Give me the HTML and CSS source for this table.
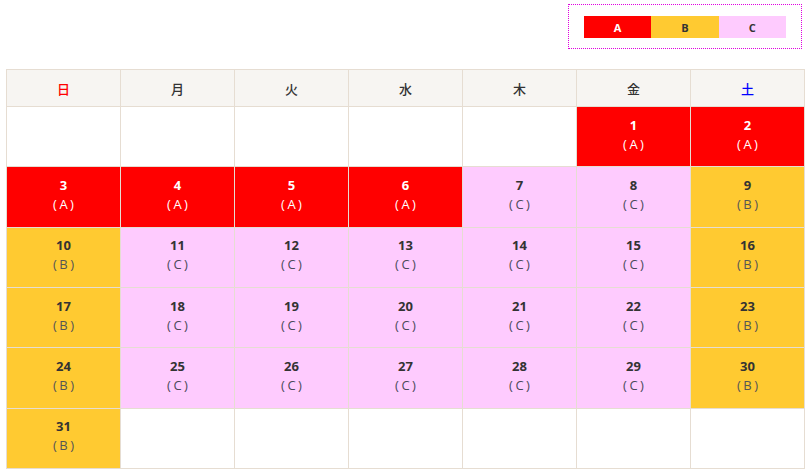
FILE: index.html
```html
<!DOCTYPE html>
<html lang="ja">
<head>
<meta charset="utf-8">
<title>カレンダー</title>
<link rel="stylesheet" href="styles.css">
</head>
<body>
<div class="page">
  <div class="legend">
    <span class="key key-a">A</span><span class="key key-b">B</span><span class="key key-c">C</span>
  </div>
  <table class="cal">
    <thead>
      <tr>
        <th class="sun">日</th><th>月</th><th>火</th><th>水</th><th>木</th><th>金</th><th class="sat">土</th>
      </tr>
    </thead>
    <tbody>
      <tr>
        <td></td><td></td><td></td><td></td><td></td>
        <td class="a"><b>1</b><span>(A)</span></td>
        <td class="a"><b>2</b><span>(A)</span></td>
      </tr>
      <tr>
        <td class="a"><b>3</b><span>(A)</span></td>
        <td class="a"><b>4</b><span>(A)</span></td>
        <td class="a"><b>5</b><span>(A)</span></td>
        <td class="a"><b>6</b><span>(A)</span></td>
        <td class="c"><b>7</b><span>(C)</span></td>
        <td class="c"><b>8</b><span>(C)</span></td>
        <td class="b"><b>9</b><span>(B)</span></td>
      </tr>
      <tr>
        <td class="b"><b>10</b><span>(B)</span></td>
        <td class="c"><b>11</b><span>(C)</span></td>
        <td class="c"><b>12</b><span>(C)</span></td>
        <td class="c"><b>13</b><span>(C)</span></td>
        <td class="c"><b>14</b><span>(C)</span></td>
        <td class="c"><b>15</b><span>(C)</span></td>
        <td class="b"><b>16</b><span>(B)</span></td>
      </tr>
      <tr>
        <td class="b"><b>17</b><span>(B)</span></td>
        <td class="c"><b>18</b><span>(C)</span></td>
        <td class="c"><b>19</b><span>(C)</span></td>
        <td class="c"><b>20</b><span>(C)</span></td>
        <td class="c"><b>21</b><span>(C)</span></td>
        <td class="c"><b>22</b><span>(C)</span></td>
        <td class="b"><b>23</b><span>(B)</span></td>
      </tr>
      <tr>
        <td class="b"><b>24</b><span>(B)</span></td>
        <td class="c"><b>25</b><span>(C)</span></td>
        <td class="c"><b>26</b><span>(C)</span></td>
        <td class="c"><b>27</b><span>(C)</span></td>
        <td class="c"><b>28</b><span>(C)</span></td>
        <td class="c"><b>29</b><span>(C)</span></td>
        <td class="b"><b>30</b><span>(B)</span></td>
      </tr>
      <tr>
        <td class="b"><b>31</b><span>(B)</span></td>
        <td></td><td></td><td></td><td></td><td></td><td></td>
      </tr>
    </tbody>
  </table>
</div>
</body>
</html>
```

FILE: styles.css
```css
html, body {
  margin: 0;
  padding: 0;
  background: #fff;
}
body {
  font-family: "Open Sans", "Noto Sans CJK JP", sans-serif;
  color: #333;
}
.page {
  display: flex;
  flex-direction: column;
  padding: 4px 6px 0 6px;
}
.legend {
  align-self: flex-end;
  margin-right: 3px;
  width: 234px;
  height: 45px;
  box-sizing: border-box;
  border: 1px dotted #e000e0;
  padding: 11px 15px 0 15px;
  display: flex;
}
.key {
  width: 68px;
  height: 22px;
  display: flex;
  align-items: center;
  justify-content: center;
  font-size: 11px;
  font-weight: 700;
}
.key-a { background: #ff0000; color: #fff; }
.key-b { background: #ffca31; color: #333; }
.key-c { background: #fecbfe; color: #333; }

.cal {
  margin-top: 20px;
  width: 799px;
  border-collapse: collapse;
  table-layout: fixed;
}
.cal th, .cal td {
  border: 1px solid #e6ddd2;
  text-align: center;
  padding: 0;
}
.cal th {
  height: 36px;
  background: #f7f5f2;
  font-family: "Noto Sans CJK JP", sans-serif;
  font-size: 13px;
  font-weight: 500;
  color: #333;
}
.cal th.sun { color: #ff0000; }
.cal th.sat { color: #0000ff; }
.cal td {
  height: 55.33px;
  padding-bottom: 4px;
  vertical-align: middle;
}
.cal td b {
  display: block;
  font-size: 13px;
  font-weight: 700;
  line-height: 18px;
  color: #333;
}
.cal td span {
  display: block;
  font-size: 13px;
  line-height: 20px;
  letter-spacing: 2.5px;
  padding-left: 2.5px;
  color: #555;
}
.cal td.a { background: #ff0000; }
.cal td.a b, .cal td.a span { color: #fff; }
.cal td.b { background: #ffca31; }
.cal td.c { background: #fecbfe; }
.cal td.c span { color: #4a4a5a; }
```
